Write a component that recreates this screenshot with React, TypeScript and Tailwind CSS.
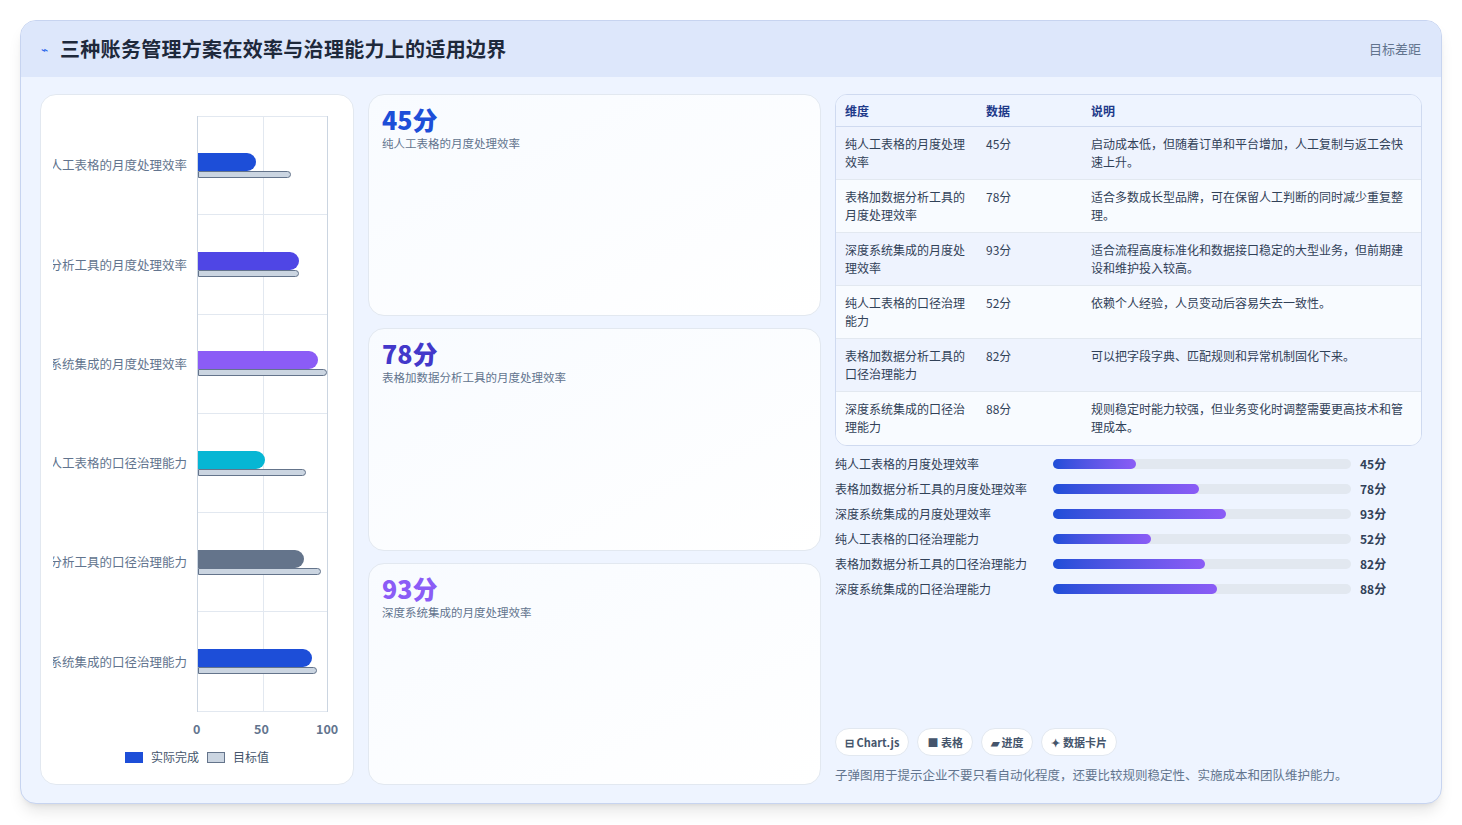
const font = { fontFamily: '"Noto Sans CJK SC", "Noto Sans", sans-serif' };

const chart = [
  { label: '纯人工表格的月度处理效率', v: 45, t: 72, c: 'bg-[#1d4ed8]' },
  { label: '表格加数据分析工具的月度处理效率', v: 78, t: 78, c: 'bg-[#4f46e5]' },
  { label: '深度系统集成的月度处理效率', v: 93, t: 100, c: 'bg-[#8b5cf6]' },
  { label: '纯人工表格的口径治理能力', v: 52, t: 84, c: 'bg-[#06b6d4]' },
  { label: '表格加数据分析工具的口径治理能力', v: 82, t: 95, c: 'bg-[#64748b]' },
  { label: '深度系统集成的口径治理能力', v: 88, t: 92, c: 'bg-[#1d4ed8]' },
];

const rows = [
  ['纯人工表格的月度处理效率', '45分', '启动成本低，但随着订单和平台增加，人工复制与返工会快速上升。'],
  ['表格加数据分析工具的月度处理效率', '78分', '适合多数成长型品牌，可在保留人工判断的同时减少重复整理。'],
  ['深度系统集成的月度处理效率', '93分', '适合流程高度标准化和数据接口稳定的大型业务，但前期建设和维护投入较高。'],
  ['纯人工表格的口径治理能力', '52分', '依赖个人经验，人员变动后容易失去一致性。'],
  ['表格加数据分析工具的口径治理能力', '82分', '可以把字段字典、匹配规则和异常机制固化下来。'],
  ['深度系统集成的口径治理能力', '88分', '规则稳定时能力较强，但业务变化时调整需要更高技术和管理成本。'],
];

const fills = [28, 49, 58, 33, 51, 55];

export default function App() {
  return (
    <div style={font} className="w-[1462px] h-[825px] bg-white p-5 text-slate-800">
      <div className="h-[784px] rounded-2xl border border-[#c7d4f0] bg-[#eef4ff] shadow-lg overflow-hidden flex flex-col">
        <div className="h-[56px] bg-[#dde7fb] flex items-center justify-between px-5">
          <div className="flex items-center gap-3">
            <span className="text-[#2563eb] text-xs">⌁</span>
            <h1 className="text-[20px] font-bold text-[#1e293b] tracking-[0.3px]">三种账务管理方案在效率与治理能力上的适用边界</h1>
          </div>
          <span className="text-[13px] text-slate-500">目标差距</span>
        </div>
        <div className="flex-1 flex gap-[14px] px-[19px] pt-[17px] pb-[18px]">
          <div className="w-[314px] bg-white rounded-2xl border border-[#e2e8f0] pt-[21px] pb-4 flex flex-col">
            <div className="flex">
              <div className="w-[134px] ml-[12px] flex flex-col">
                {chart.map((r) => (
                  <div key={r.label} className="h-[99.3px] overflow-hidden flex items-center justify-end">
                    <span className="whitespace-nowrap text-[12.5px] text-slate-500">{r.label}</span>
                  </div>
                ))}
              </div>
              <div className="relative w-[131px] ml-[10px] h-[596px] border-l border-r border-[#cbd5e1]">
                <div className="absolute inset-y-0 left-[65px] border-l border-[#e2e8f0]" />
                <div className="flex flex-col h-full">
                  {chart.map((r, i) => (
                    <div key={i} className={`h-[99.3px] flex flex-col justify-center relative ${i === 0 ? 'border-t' : ''} border-b border-[#e2e8f0]`}>
                      <div className={`h-[18px] ${r.c} rounded-r-xl`} style={{ width: `${r.v}%` }} />
                      <div className="h-[7px] bg-[#cbd5e1] border border-[#64748b] rounded-r" style={{ width: `${r.t}%` }} />
                    </div>
                  ))}
                </div>
              </div>
            </div>
            <div className="ml-[156px] text-[12.5px] text-slate-500 font-semibold mt-2 relative h-4">
              <span className="absolute left-[-4px]">0</span>
              <span className="absolute left-[57px]">50</span>
              <span className="absolute left-[119px]">100</span>
            </div>
            <div className="flex items-center justify-center gap-2 mt-3 text-[12px] text-slate-600">
              <span className="w-[18px] h-[11px] bg-[#1d4ed8]" />
              <span>实际完成</span>
              <span className="w-[18px] h-[11px] bg-[#cbd5e1] border border-[#64748b]" />
              <span>目标值</span>
            </div>
          </div>
          <div className="w-[453px] flex flex-col gap-3">
            {[
              ['45分', '纯人工表格的月度处理效率', 'text-[#1d4ed8]'],
              ['78分', '表格加数据分析工具的月度处理效率', 'text-[#4338ca]'],
              ['93分', '深度系统集成的月度处理效率', 'text-[#8b5cf6]'],
            ].map(([n, l, c]) => (
              <div key={n} className="flex-1 rounded-2xl border border-[#e2e8f0] bg-gradient-to-br from-[#f8fbff] to-white px-[13px] pt-[8px]">
                <div className={`text-[25px] font-extrabold leading-8 ${c}`}>{n}</div>
                <div className="text-[11.5px] text-slate-500">{l}</div>
              </div>
            ))}
          </div>
          <div className="flex-1 flex flex-col">
            <div className="rounded-xl border border-[#cfdaf0] overflow-hidden bg-[#f8fbff]">
              <div className="grid grid-cols-[141px_105px_1fr] h-[32px] items-center px-[9px] bg-[#eef4ff] text-[12px] font-semibold text-[#1e3a8a] border-b border-[#cfdaf0]">
                <span>维度</span><span>数据</span><span>说明</span>
              </div>
              {rows.map((r, i) => (
                <div key={i} className={`grid grid-cols-[141px_105px_1fr] h-[53px] pt-[8px] px-[9px] text-[12px] leading-[18px] text-slate-700 ${i % 2 === 0 ? 'bg-[#eef3fe]' : 'bg-[#f8fbff]'} ${i < 5 ? 'border-b border-[#e2e8f0]' : ''}`}>
                  <span className="pr-4">{r[0]}</span><span>{r[1]}</span><span className="pr-0">{r[2]}</span>
                </div>
              ))}
            </div>
            <div className="flex flex-col gap-[7px] mt-[9px]">
              {chart.map((r, i) => (
                <div key={i} className="flex items-center h-[18px] text-[12px] text-slate-700">
                  <span className="w-[218px] whitespace-nowrap">{r.label}</span>
                  <div className="w-[298px] h-[10px] rounded-full bg-[#e2e8f0]">
                    <div className="h-full rounded-full bg-gradient-to-r from-[#1d4ed8] to-[#8b5cf6]" style={{ width: `${fills[i]}%` }} />
                  </div>
                  <span className="ml-[9px] font-semibold">{r.v}分</span>
                </div>
              ))}
            </div>
            <div className="flex-1" />
            <div className="flex gap-2 text-[11px] text-slate-600 font-semibold">
              {['⊟ Chart.js', '■ 表格', '▰ 进度', '✦ 数据卡片'].map((t) => (
                <span key={t} className="rounded-full bg-white border border-[#e2e8f0] px-[9px] py-[5px]">{t}</span>
              ))}
            </div>
            <p className="text-[12.5px] text-slate-500 mt-[10px]">子弹图用于提示企业不要只看自动化程度，还要比较规则稳定性、实施成本和团队维护能力。</p>
          </div>
        </div>
      </div>
    </div>
  );
}
